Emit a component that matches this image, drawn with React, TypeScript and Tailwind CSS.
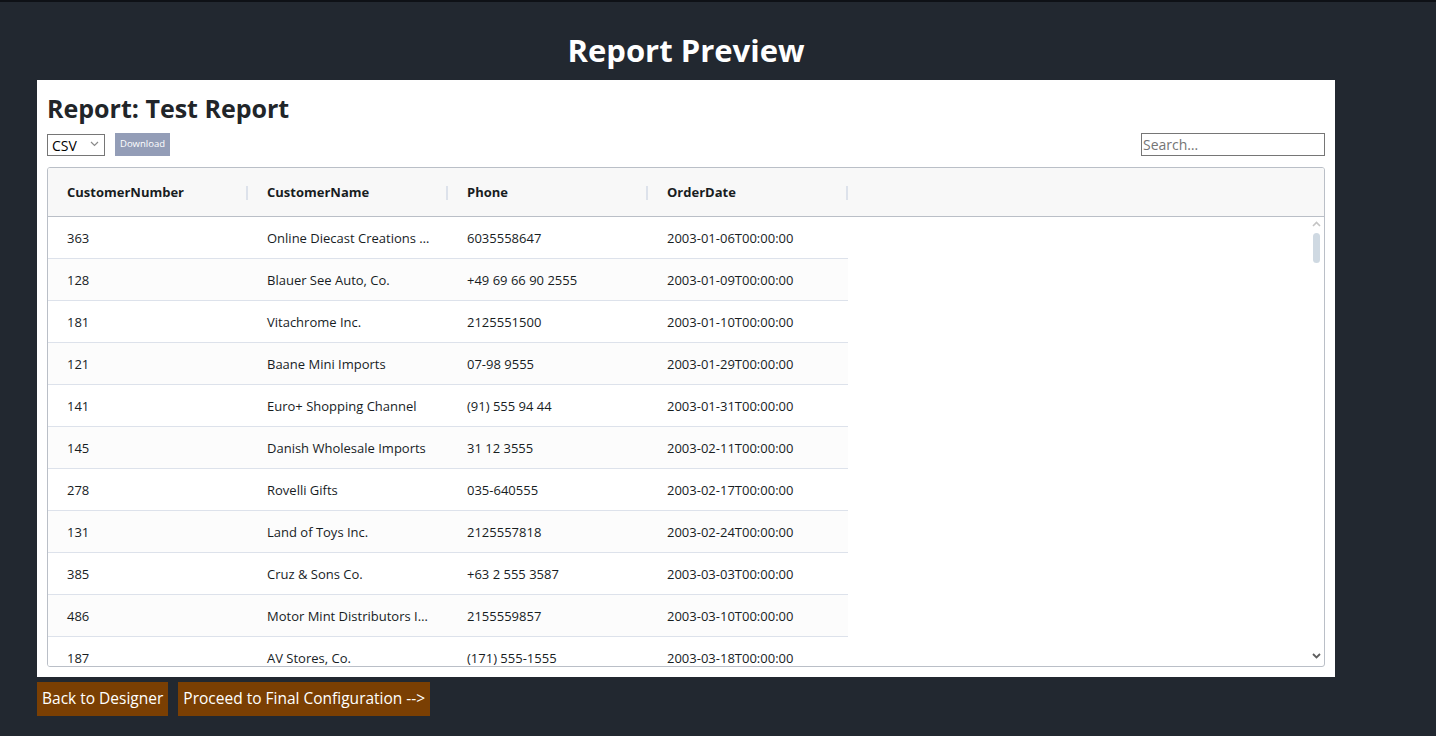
import React from "react";

type Row = { num: string; name: string; phone: string; date: string };

const rows: Row[] = [
  { num: "363", name: "Online Diecast Creations Co.", phone: "6035558647", date: "2003-01-06T00:00:00" },
  { num: "128", name: "Blauer See Auto, Co.", phone: "+49 69 66 90 2555", date: "2003-01-09T00:00:00" },
  { num: "181", name: "Vitachrome Inc.", phone: "2125551500", date: "2003-01-10T00:00:00" },
  { num: "121", name: "Baane Mini Imports", phone: "07-98 9555", date: "2003-01-29T00:00:00" },
  { num: "141", name: "Euro+ Shopping Channel", phone: "(91) 555 94 44", date: "2003-01-31T00:00:00" },
  { num: "145", name: "Danish Wholesale Imports", phone: "31 12 3555", date: "2003-02-11T00:00:00" },
  { num: "278", name: "Rovelli Gifts", phone: "035-640555", date: "2003-02-17T00:00:00" },
  { num: "131", name: "Land of Toys Inc.", phone: "2125557818", date: "2003-02-24T00:00:00" },
  { num: "385", name: "Cruz & Sons Co.", phone: "+63 2 555 3587", date: "2003-03-03T00:00:00" },
  { num: "486", name: "Motor Mint Distributors Inc.", phone: "2155559857", date: "2003-03-10T00:00:00" },
  { num: "187", name: "AV Stores, Co.", phone: "(171) 555-1555", date: "2003-03-18T00:00:00" },
  { num: "129", name: "Mini Wheels Co.", phone: "6505555787", date: "2003-03-24T00:00:00" },
  { num: "144", name: "Volvo Model Replicas, Co", phone: "0921-12 3555", date: "2003-03-26T00:00:00" },
];

const columns = ["CustomerNumber", "CustomerName", "Phone", "OrderDate"];

const App: React.FC = () => {
  return (
    <div
      className="min-h-[736px] bg-[#222830] border-t-2 border-[#0e1116] pb-5"
      style={{ fontFamily: '"Open Sans", "Noto Sans", sans-serif' }}
    >
      <div className="ml-[37px] w-[1298px]">
        <h1 className="h-[78px] pt-[26px] text-center text-[31px] font-bold leading-[44px] text-white">
          Report Preview
        </h1>

        <div className="h-[597px] bg-white px-[10px] pt-[12px]">
          <h2 className="text-[25px] font-bold leading-[32px] text-[#212529]">Report: Test Report</h2>

          <div className="mt-[9px] flex h-[23px] items-center">
            <div className="relative">
              <select className="h-[22px] w-[58px] appearance-none border border-[#767676] bg-white pl-[4px] text-[14px] text-black">
                <option>CSV</option>
                <option>Excel</option>
                <option>PDF</option>
              </select>
              <svg width="9" height="6" viewBox="0 0 9 6" className="pointer-events-none absolute right-[6px] top-[8px]">
                <path d="M1 1 L4.5 4.5 L8 1" fill="none" stroke="#8a8a8a" strokeWidth="1.2" />
              </svg>
            </div>
            <button className="ml-[10px] h-[23px] bg-[#939db7] px-[5px] text-[9.5px] text-white">Download</button>
            <input
              placeholder="Search…"
              className="ml-auto h-[23px] w-[184px] border border-[#767676] px-[1px] text-[14px] placeholder:text-[#757575]"
            />
          </div>

          <div className="mt-[11px] h-[500px] overflow-hidden rounded-[3px] border border-[#babfc7] text-[13px] text-[#181d1f]">
            <div className="flex h-[49px] border-b border-[#babfc7] bg-[#f8f8f8] pt-[2px]">
              {columns.map((c) => (
                <div key={c} className="flex w-[200px] items-center justify-between pl-[19px] font-bold">
                  <span>{c}</span>
                  <span className="h-[14px] w-[2px] bg-[#dde2eb]" />
                </div>
              ))}
            </div>
            <div className="relative h-[449px]">
              <div className="h-full overflow-y-auto [scrollbar-width:none]">
                {rows.map((r, i) => (
                  <div
                    key={r.num + i}
                    className={`flex h-[42px] w-[800px] items-center border-b border-[#dde2eb] pt-[3px] ${
                      i % 2 === 1 ? "bg-[#fcfcfc]" : "bg-white"
                    }`}
                  >
                    <div className="w-[200px] truncate pl-[19px] pr-[17px]">{r.num}</div>
                    <div className="w-[200px] truncate pl-[19px] pr-[17px]">{r.name}</div>
                    <div className="w-[200px] truncate pl-[19px] pr-[17px]">{r.phone}</div>
                    <div className="w-[200px] truncate pl-[19px] pr-[17px]">{r.date}</div>
                  </div>
                ))}
              </div>
              {/* scrollbar */}
              <div className="absolute right-[1px] top-0 flex h-full w-[14px] flex-col items-center py-[3px]">
                <svg width="9" height="6" viewBox="0 0 9 6" className="mt-[1px]">
                  <path d="M1 5 L4.5 1.5 L8 5" fill="none" stroke="#c4c4c4" strokeWidth="1.6" />
                </svg>
                <div className="mt-[6px] h-[30px] w-[7px] rounded-[4px] bg-[#cfd9e2]" />
                <div className="flex-1" />
                <svg width="9" height="6" viewBox="0 0 9 6" className="mb-[4px]">
                  <path d="M1 1 L4.5 4.5 L8 1" fill="none" stroke="#5f5f5f" strokeWidth="1.8" />
                </svg>
              </div>
            </div>
          </div>
        </div>

        <div className="mt-[5px] flex gap-[10px]">
          <button className="flex h-[34px] items-center bg-[#7a3f03] px-[5px] text-[15.5px] text-white">
            Back to Designer
          </button>
          <button className="flex h-[34px] items-center bg-[#7a3f03] px-[5px] text-[15.5px] text-white">
            Proceed to Final Configuration --&gt;
          </button>
        </div>
      </div>
    </div>
  );
};

export default App;
